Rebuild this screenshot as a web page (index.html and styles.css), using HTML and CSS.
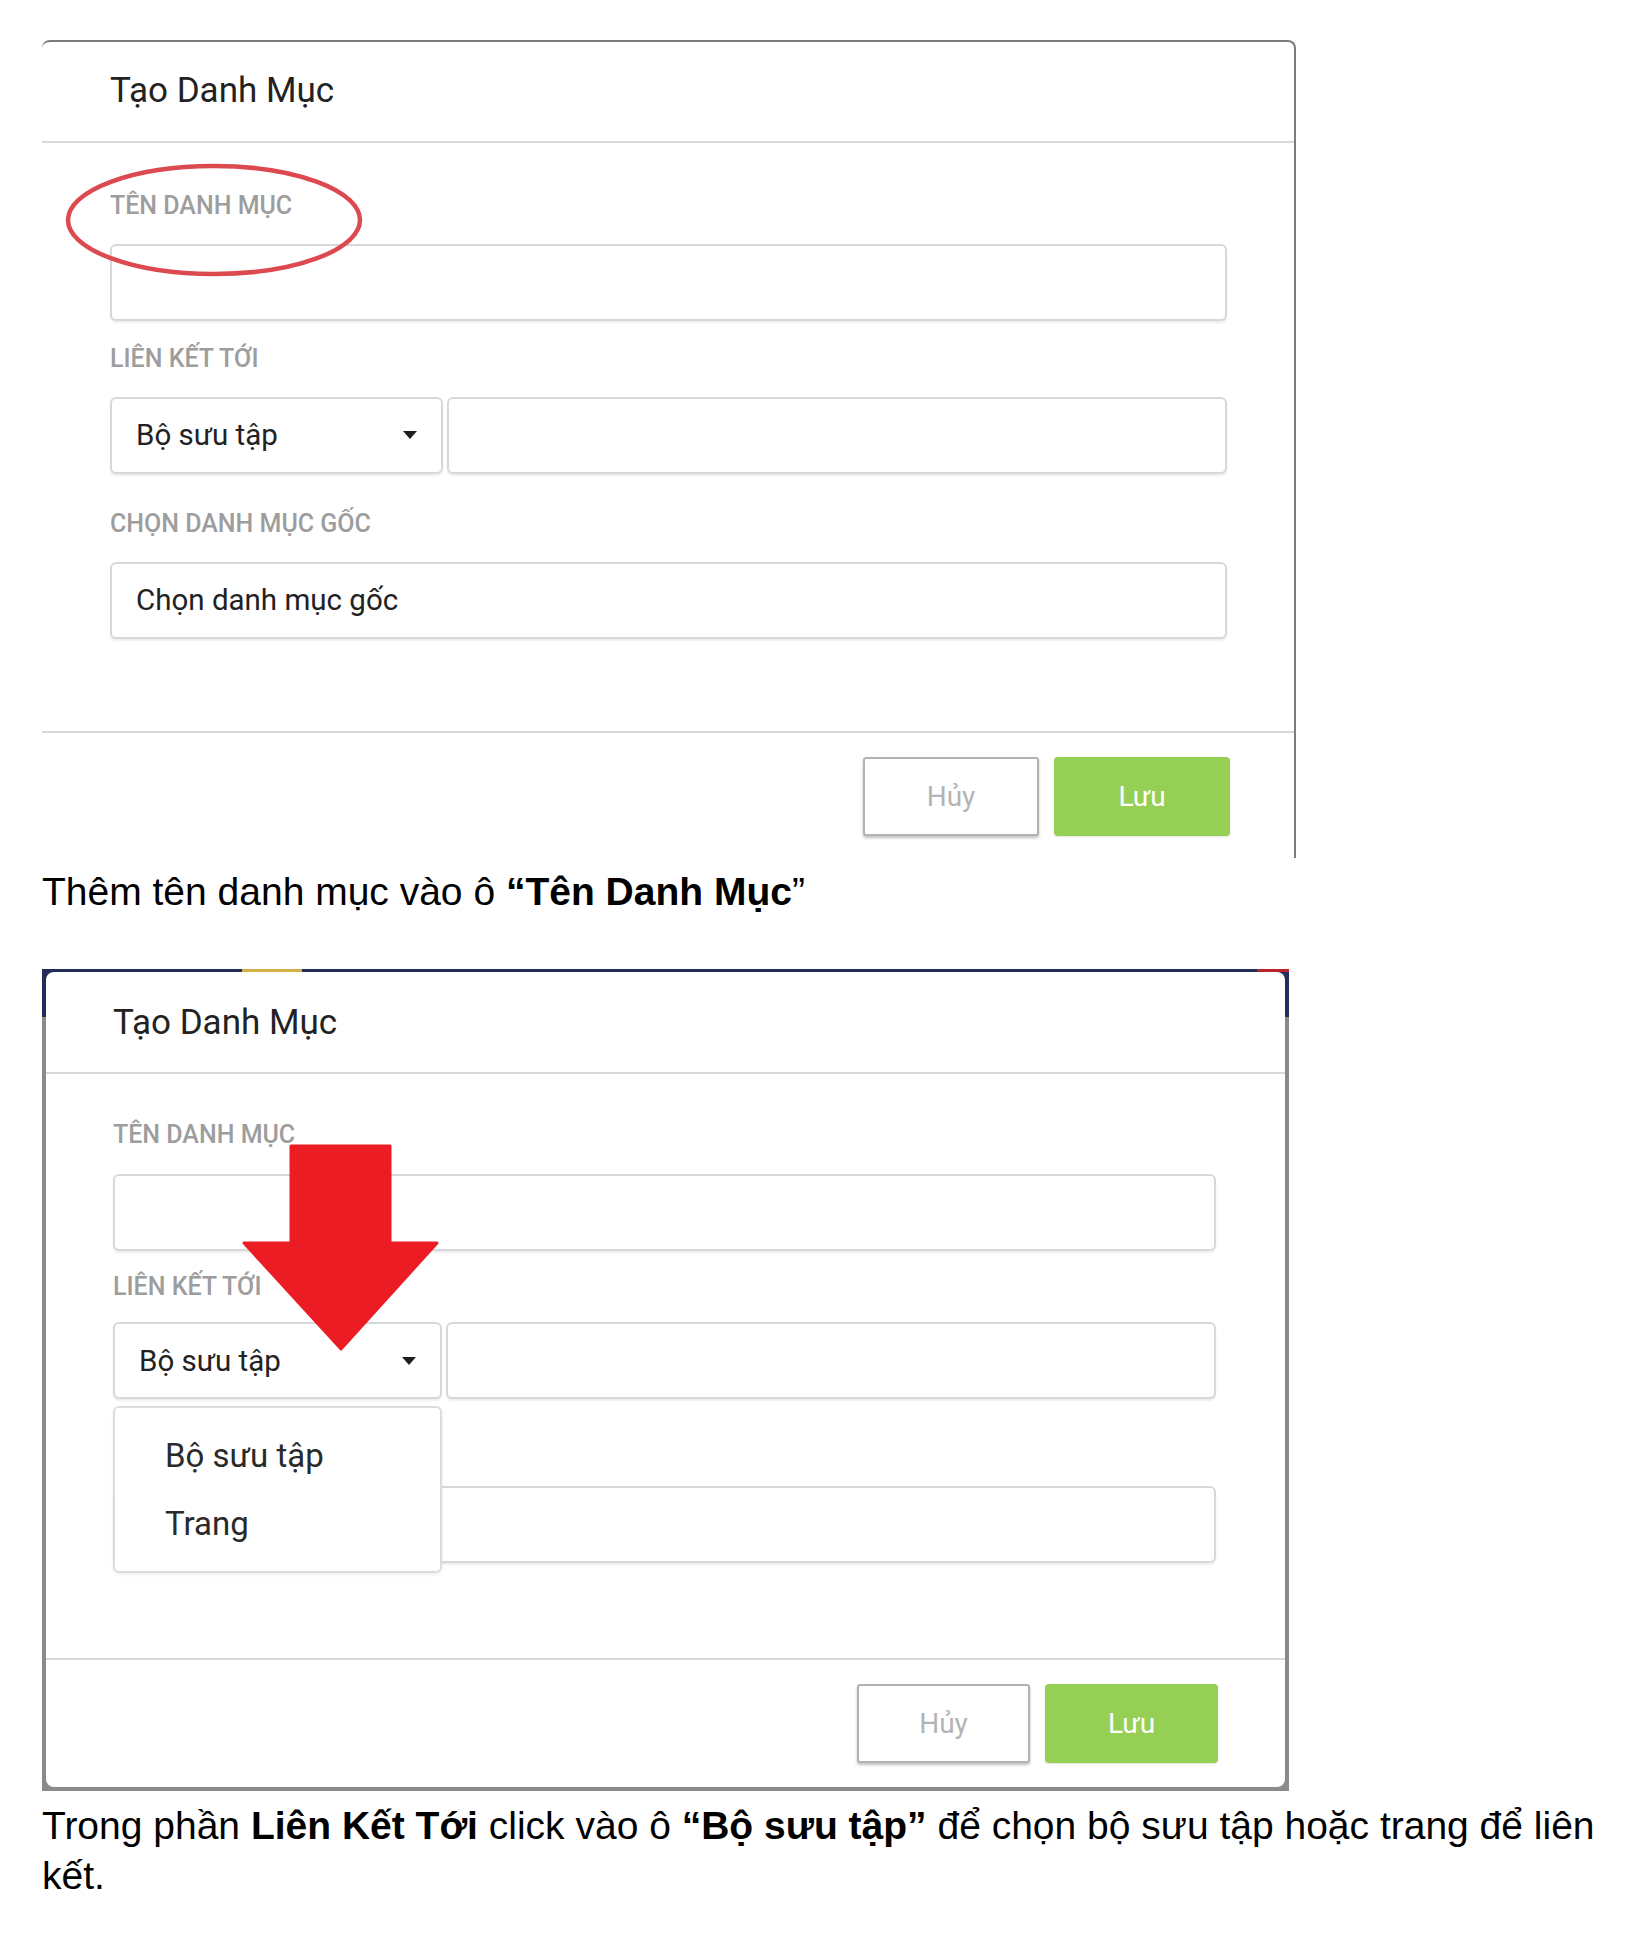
FILE: index.html
```html
<!DOCTYPE html>
<html lang="vi">
<head>
<meta charset="utf-8">
<title>Tạo Danh Mục</title>
<link rel="stylesheet" href="styles.css">
</head>
<body>
<main class="doc">

  <section class="shot shot-1">
    <div class="modal modal-1">
      <header class="modal-header"><h2 class="modal-title">Tạo Danh Mục</h2></header>
      <div class="modal-body">
        <div class="field">
          <div class="field-label">TÊN DANH MỤC</div>
          <div class="input"></div>
        </div>
        <div class="field field-link">
          <div class="field-label">LIÊN KẾT TỚI</div>
          <div class="link-row">
            <div class="input select"><span class="input-text">Bộ sưu tập</span><span class="caret"></span></div>
            <div class="input input-grow"></div>
          </div>
        </div>
        <div class="field field-parent">
          <div class="field-label">CHỌN DANH MỤC GỐC</div>
          <div class="input"><span class="input-text">Chọn danh mục gốc</span></div>
        </div>
      </div>
      <footer class="modal-footer">
        <button class="btn btn-cancel">Hủy</button>
        <button class="btn btn-save">Lưu</button>
      </footer>
      <svg class="mark-ellipse" width="300" height="116" viewBox="0 0 300 116" aria-hidden="true">
        <ellipse cx="150" cy="58" rx="146" ry="54" fill="none" stroke="#dc4a50" stroke-width="4.5"/>
      </svg>
    </div>
  </section>
  <p class="caption caption-1">Thêm tên danh mục vào ô <b>“Tên Danh Mục</b>”</p>

  <section class="shot shot-2">
    <div class="frame">
      <div class="modal modal-2">
        <header class="modal-header"><h2 class="modal-title">Tạo Danh Mục</h2></header>
        <div class="modal-body">
          <div class="field">
            <div class="field-label">TÊN DANH MỤC</div>
            <div class="input"></div>
          </div>
          <div class="field field-link">
            <div class="field-label">LIÊN KẾT TỚI</div>
            <div class="link-row">
              <div class="input select"><span class="input-text">Bộ sưu tập</span><span class="caret"></span></div>
              <div class="input input-grow"></div>
              <ul class="menu">
                <li class="menu-item">Bộ sưu tập</li>
                <li class="menu-item">Trang</li>
              </ul>
            </div>
          </div>
          <div class="field field-parent">
            <div class="field-label field-label-covered" aria-hidden="true"></div>
            <div class="input"></div>
          </div>
        </div>
        <footer class="modal-footer">
          <button class="btn btn-cancel">Hủy</button>
          <button class="btn btn-save">Lưu</button>
        </footer>
        <svg class="mark-arrow" width="197" height="207" viewBox="0 0 197 207" aria-hidden="true">
          <polygon points="49,2 148,2 148,99 195,99 99,205 2,99 49,99" fill="#ec1c24" stroke="#ec1c24" stroke-width="3" stroke-linejoin="round"/>
        </svg>
      </div>
    </div>
  </section>
  <p class="caption caption-2">Trong phần <b>Liên Kết Tới</b> click vào ô <b>“Bộ sưu tập”</b> để chọn bộ sưu tập hoặc trang để liên<br>kết.</p>

</main>
</body>
</html>
```

FILE: styles.css
```css
* { box-sizing: border-box; margin: 0; padding: 0; }

html, body { background: #ffffff; }

body {
  font-family: Roboto, "Noto Sans", "Liberation Sans", sans-serif;
  color: #212121;
}

.doc {
  padding: 40px 0 40px 42px;
}

/* ---------- modal ---------- */
.modal {
  position: relative;
  background: #ffffff;
}

.modal-1 {
  width: 1254px;
  border-top: 2px solid #7c7c7c;
  border-right: 2px solid #7c7c7c;
  border-radius: 8px 8px 0 0;
}

.frame {
  width: 1247px;
  padding: 3px 4px 4px 4px;
  background:
    linear-gradient(#d4ae48, #d4ae48) 200px 0 / 60px 3px no-repeat,
    linear-gradient(#b8232c, #b8232c) right 0 top 0 / 32px 3px no-repeat,
    linear-gradient(to bottom, #242c5a 0, #242c5a 48px, #8a8a8a 48px, #8a8a8a 100%);
}

.modal-2 {
  border-radius: 8px;
}

.modal-header {
  height: 101px;
  padding: 30px 0 0 68px;
  border-bottom: 2px solid #d6d9dc;
}

.modal-2 .modal-header {
  height: 102.5px;
  padding: 32px 0 0 67px;
}

.modal-title {
  font-family: Roboto, "Noto Sans", sans-serif;
  font-weight: 400;
  font-size: 35px;
  line-height: 38px;
  color: #222222;
}

.modal-body {
  padding: 49.5px 67px 92.5px 68px;
  border-bottom: 2px solid #d6d9dc;
}

.modal-2 .modal-body {
  padding: 47.5px 69px 95px 67px;
}

.field + .field { margin-top: 25px; }
.field.field-parent { margin-top: 37px; }

.field-label {
  font-size: 25px;
  line-height: 26px;
  height: 26px;
  font-weight: 500;
  color: #9d9d9d;
  margin-bottom: 25px;
}

.modal-2 .field-label { margin-bottom: 26.5px; }
.modal-2 .field + .field { margin-top: 22.5px; }
.modal-2 .field-link .field-label { margin-bottom: 22.5px; }
.modal-2 .field.field-parent { margin-top: 36px; }
.modal-2 .field-parent .field-label { margin-bottom: 25px; }

.input {
  height: 77px;
  border: 2px solid #d5d8dc;
  border-radius: 6px;
  background: #ffffff;
  box-shadow: 0 2px 2px rgba(0, 0, 0, 0.07);
  display: flex;
  align-items: center;
  padding: 0 24px;
}

.input-text {
  font-size: 29.5px;
  color: #222222;
  white-space: nowrap;
}

.link-row {
  position: relative;
  display: flex;
  gap: 4px;
}

.select {
  width: 333px;
  flex: none;
  justify-content: space-between;
}

.modal-2 .select { width: 329px; }

.input-grow { flex: 1; }

.caret {
  width: 0;
  height: 0;
  border-left: 7.5px solid transparent;
  border-right: 7.5px solid transparent;
  border-top: 8px solid #1e1e1e;
}

/* ---------- dropdown ---------- */
.menu {
  position: absolute;
  left: 0;
  top: calc(100% + 7px);
  width: 329px;
  list-style: none;
  background: #ffffff;
  border: 2px solid #dcdcdc;
  border-radius: 6px;
  box-shadow: 0 2px 4px rgba(0, 0, 0, 0.06);
  padding: 14px 0 13px 50px;
  z-index: 2;
}

.menu-item {
  font-size: 33px;
  line-height: 68px;
  color: #2a2a2a;
}

/* ---------- footer ---------- */
.modal-footer {
  display: flex;
  justify-content: flex-end;
  gap: 15px;
  padding: 24px 64px 22px 0;
}

.modal-2 .modal-footer {
  padding: 23.5px 67px 24.5px 0;
}

.btn {
  width: 176px;
  height: 79px;
  font-family: Roboto, "Noto Sans", sans-serif;
  font-size: 28px;
  border-radius: 3px;
  cursor: pointer;
}

.modal-2 .btn { width: 173px; }

.btn-cancel {
  background: #ffffff;
  color: #b4b4b4;
  border: 2px solid #b3b3b3;
  box-shadow: 0 2px 3px rgba(0, 0, 0, 0.25);
}

.btn-save {
  background: #95d055;
  color: #ffffff;
  border: 0;
  border-radius: 4px;
  box-shadow: 0 1px 2px rgba(0, 0, 0, 0.12);
}

/* ---------- annotations ---------- */
.mark-ellipse {
  position: absolute;
  left: 22px;
  top: 120px;
}

.mark-arrow {
  position: absolute;
  left: 196px;
  top: 172px;
  z-index: 3;
}

/* ---------- captions ---------- */
.caption {
  font-family: "Liberation Sans", Arial, sans-serif;
  font-size: 39px;
  color: #000000;
  max-width: 1590px;
}

.caption b { font-weight: 700; }

.caption-1 {
  line-height: 46px;
  margin: 11px 0 53.5px;
}

.caption-2 {
  line-height: 50px;
  margin-top: 10px;
}
```
